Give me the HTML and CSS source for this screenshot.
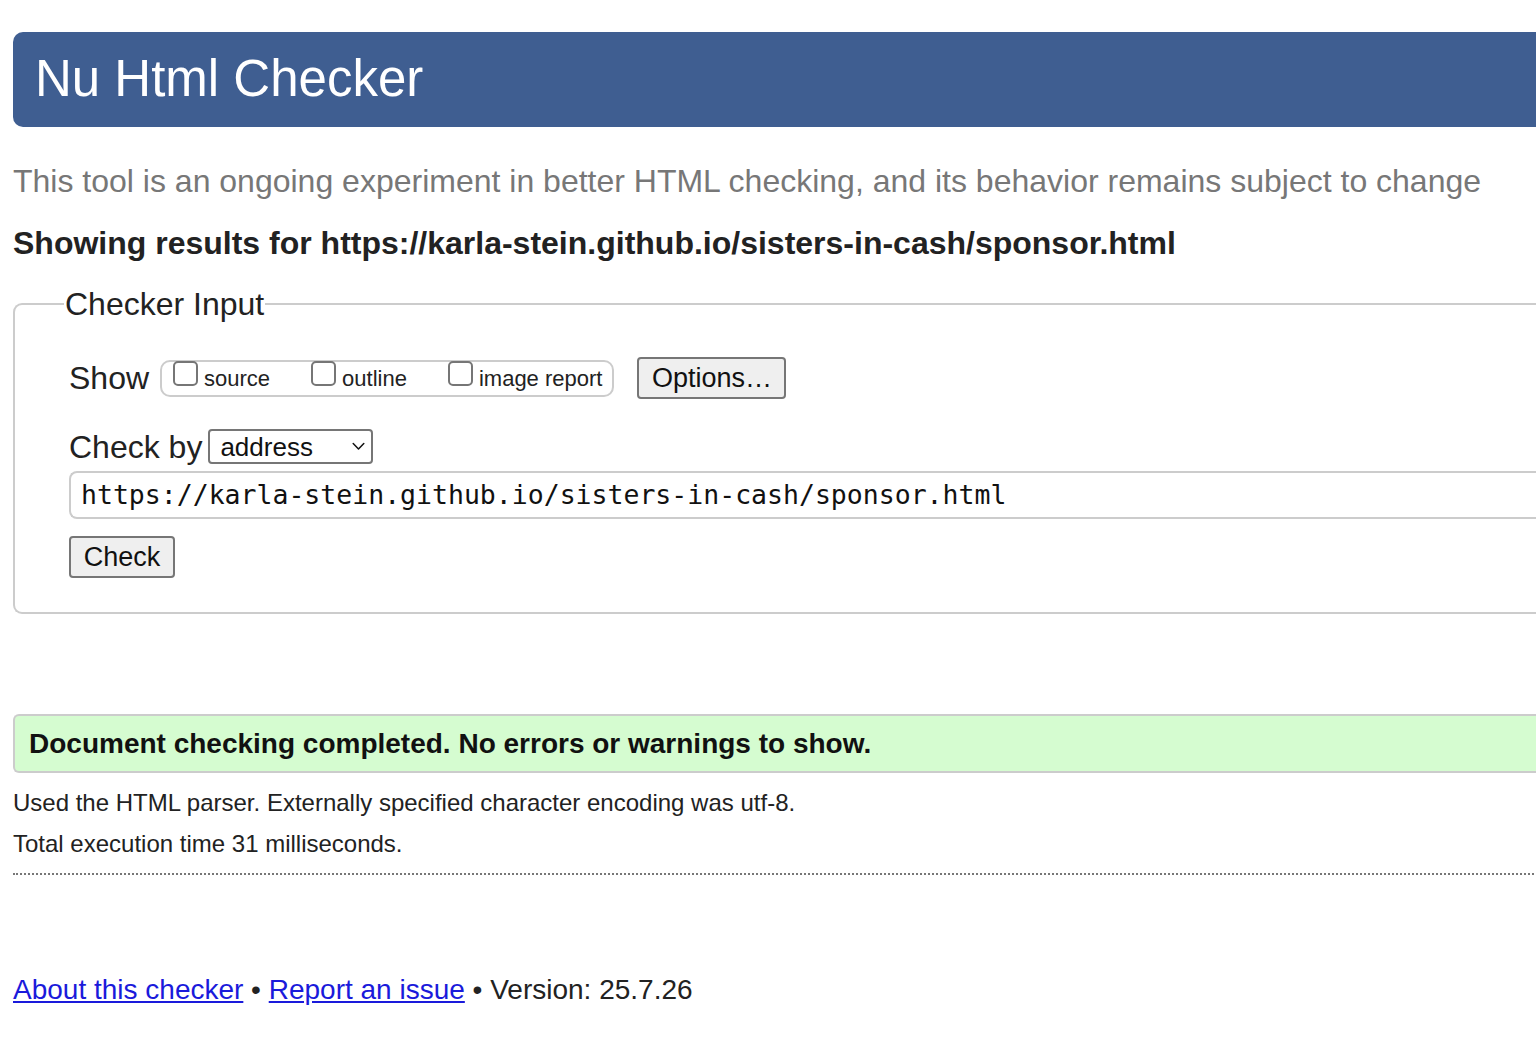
FILE: index.html
```html
<!DOCTYPE html>
<html lang="en">
<head>
<meta charset="utf-8">
<title>Nu Html Checker</title>
<link rel="stylesheet" href="styles.css">
</head>
<body>
<div class="page">
  <header class="banner"><h1 class="title">Nu Html Checker</h1></header>
  <p class="tagline">This tool is an ongoing experiment in better HTML checking, and its behavior remains subject to change</p>
  <p class="results-for">Showing results for https://karla-stein.github.io/sisters-in-cash/sponsor.html</p>

  <fieldset class="checker">
    <legend class="legend">Checker Input</legend>
    <div class="row row-show">
      <span class="label-lg">Show</span>
      <div class="opts">
        <label class="opt"><span class="cb"></span><span class="opt-text">source</span></label>
        <label class="opt"><span class="cb"></span><span class="opt-text">outline</span></label>
        <label class="opt"><span class="cb"></span><span class="opt-text">image report</span></label>
      </div>
      <button class="btn btn-options" type="button">Options…</button>
    </div>
    <div class="row row-by">
      <span class="label-lg">Check by</span>
      <span class="select">
        <span class="select-text">address</span>
        <svg class="chev" width="13" height="9" viewBox="0 0 13 9"><path d="M1.2 1.5 L6.5 7 L11.8 1.5" fill="none" stroke="#111" stroke-width="1.5" stroke-linecap="round" stroke-linejoin="round"/></svg>
      </span>
    </div>
    <div class="url">https://karla-stein.github.io/sisters-in-cash/sponsor.html</div>
    <button class="btn btn-check" type="button">Check</button>
  </fieldset>

  <div class="success">Document checking completed. No errors or warnings to show.</div>
  <p class="info info-1">Used the HTML parser. Externally specified character encoding was utf-8.</p>
  <p class="info info-2">Total execution time 31 milliseconds.</p>
  <hr class="dots">

  <p class="footer"><a href="#" class="link">About this checker</a> • <a href="#" class="link">Report an issue</a> • Version: 25.7.26</p>
</div>
</body>
</html>
```

FILE: styles.css
```css
html, body {
  margin: 0;
  padding: 0;
  overflow: hidden;
  background: #fff;
}
body {
  font-family: "Liberation Sans", Arial, sans-serif;
  color: #222;
}
.page {
  width: 1600px;
  padding: 32px 0 0 13px;
}
.banner {
  height: 95px;
  background: #3f5e91;
  border-radius: 10px 0 0 10px;
  display: flex;
  align-items: center;
}
.title {
  margin: 0;
  padding: 0 0 1px 22px;
  font-size: 51px;
  font-weight: normal;
  color: #fff;
  line-height: 60px;
}
.tagline {
  margin: 37px 0 0;
  font-size: 32px;
  line-height: 34px;
  color: #777;
}
.results-for {
  margin: 28px 0 0;
  font-size: 32px;
  line-height: 34px;
  font-weight: bold;
  color: #222;
}
.checker {
  margin: 27px 0 0;
  border: 2px solid #ccc;
  border-radius: 9px 0 0 9px;
  border-right: 0;
  padding: 0 0 34px 54px;
}
.legend {
  font-size: 32px;
  line-height: 34px;
  padding: 0 1px;
  margin-left: -5px;
  color: #222;
}
.row {
  display: flex;
  align-items: center;
}
.label-lg {
  font-size: 32px;
  line-height: 34px;
  color: #222;
}
.row-show {
  margin-top: 36px;
  height: 42px;
}
.opts {
  margin-left: 11px;
  height: 37px;
  box-sizing: border-box;
  border: 2px solid #ccc;
  border-radius: 10px;
  padding: 0 10px 0 11px;
  display: flex;
  align-items: flex-start;
  gap: 41px;
  margin-top: 1px;
}
.opt {
  display: flex;
  align-items: flex-start;
  gap: 6px;
}
.cb {
  width: 25px;
  height: 25px;
  box-sizing: border-box;
  border: 2px solid #767676;
  border-radius: 5px;
  margin-top: -1px;
  background: #fff;
}
.opt-text {
  font-size: 22px;
  line-height: 26px;
  margin-top: 4px;
  color: #222;
}
.btn {
  font-family: "Liberation Sans", Arial, sans-serif;
  font-size: 27px;
  color: #111;
  background: #efefef;
  border: 2px solid #767676;
  border-radius: 4px;
  box-sizing: border-box;
  height: 42px;
  padding: 0;
  line-height: 36px;
}
.btn-options {
  margin-left: 23px;
  width: 149px;
}
.row-by {
  margin-top: 30px;
  height: 35px;
}
.select {
  position: relative;
  margin-left: 6px;
  width: 165px;
  height: 35px;
  box-sizing: border-box;
  border: 2px solid #767676;
  border-radius: 4px;
  display: flex;
  align-items: center;
  padding-left: 10px;
}
.select-text {
  font-size: 26px;
  line-height: 30px;
  color: #111;
}
.chev {
  position: absolute;
  right: 6px;
  top: 11px;
}
.url {
  margin-top: 7px;
  height: 48px;
  box-sizing: border-box;
  border: 2px solid #ccc;
  border-right: 0;
  border-radius: 8px 0 0 8px;
  padding-left: 10px;
  font-family: "DejaVu Sans Mono", "Liberation Mono", monospace;
  font-size: 26.5px;
  line-height: 44px;
  color: #111;
}
.btn-check {
  display: block;
  margin-top: 17px;
  width: 106px;
}
.success {
  margin-top: 100px;
  height: 59px;
  box-sizing: border-box;
  background: #d5fcd0;
  border: 2px solid #ccc;
  border-right: 0;
  border-radius: 6px 0 0 6px;
  padding-left: 14px;
  font-size: 28px;
  font-weight: bold;
  line-height: 55px;
  color: #111;
}
.info {
  margin: 0;
  font-size: 24px;
  line-height: 26px;
  color: #222;
}
.info-1 {
  margin-top: 17px;
}
.info-2 {
  margin-top: 15px;
}
.dots {
  margin: 16px 0 0;
  border: 0;
  border-top: 2px dotted #777;
  height: 0;
}
.footer {
  margin: 100px 0 0;
  font-size: 28px;
  line-height: 30px;
  color: #222;
}
.link {
  color: #1a1adb;
}
```
